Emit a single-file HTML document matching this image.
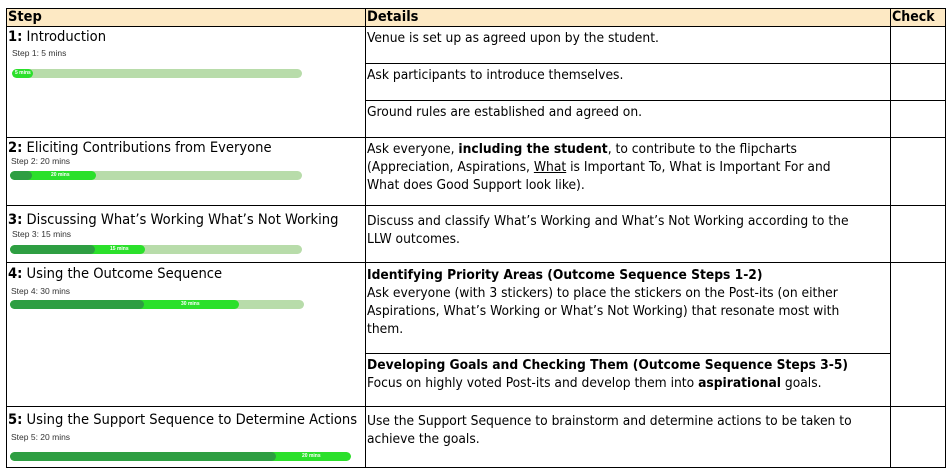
<!DOCTYPE html>
<html><head><style>
body{margin:0;width:952px;height:472px;background:#fff;position:relative;overflow:hidden;font-family:Tahoma,"DejaVu Sans Condensed","Liberation Sans",sans-serif;font-size:13.7px;color:#000}
.h{position:absolute;background:#000;height:1px}
.v{position:absolute;background:#000;width:1px}
.t{position:absolute;line-height:18px;white-space:nowrap}
.l{font-size:14.6px}
.s{position:absolute;font-size:8.5px;color:#333;font-family:"Liberation Sans",sans-serif}
.bar{position:absolute;height:9px;border-radius:5px;background:#b8dcaa;overflow:hidden}
.bar i{position:absolute;top:0;height:9px;border-radius:5px}
.bar b{position:absolute;top:0;font-size:5px;color:#fff;line-height:9px;font-weight:bold;font-family:"Liberation Sans",sans-serif}
</style></head><body>
<div style="position:absolute;left:6px;top:8px;width:939px;height:18px;background:#fde9c4"></div>
<div class="h" style="left:6px;top:8px;width:940px"></div>
<div class="h" style="left:6px;top:26px;width:940px"></div>
<div class="h" style="left:365px;top:63px;width:581px"></div>
<div class="h" style="left:365px;top:100px;width:581px"></div>
<div class="h" style="left:6px;top:137px;width:940px"></div>
<div class="h" style="left:6px;top:205px;width:940px"></div>
<div class="h" style="left:6px;top:262px;width:940px"></div>
<div class="h" style="left:365px;top:353px;width:525px"></div>
<div class="h" style="left:6px;top:406px;width:940px"></div>
<div class="h" style="left:6px;top:467px;width:940px"></div>
<div class="v" style="left:6px;top:8px;height:460px"></div>
<div class="v" style="left:365px;top:8px;height:460px"></div>
<div class="v" style="left:890px;top:8px;height:460px"></div>
<div class="v" style="left:945px;top:8px;height:460px"></div>

<div class="t" style="left:8px;top:8px;font-weight:bold;font-size:14.5px">Step</div>
<div class="t" style="left:367px;top:8px;font-weight:bold;font-size:14.5px">Details</div>
<div class="t" style="left:892px;top:8px;font-weight:bold;font-size:14px">Check</div>

<div class="t l" style="left:8px;top:28px"><b>1:</b> Introduction</div>
<div class="s" style="left:12px;top:48px">Step 1: 5 mins</div>
<div class="bar" style="left:12px;top:69px;width:290px"><i style="left:0;width:21px;background:#2be02b"></i><b style="left:3px">5 mins</b></div>
<div class="t" style="left:367px;top:29px">Venue is set up as agreed upon by the student.</div>
<div class="t" style="left:367px;top:66px">Ask participants to introduce themselves.</div>
<div class="t" style="left:367px;top:103px">Ground rules are established and agreed on.</div>

<div class="t l" style="left:8px;top:139px"><b>2:</b> Eliciting Contributions from Everyone</div>
<div class="s" style="left:11px;top:156px">Step 2: 20 mins</div>
<div class="bar" style="left:10px;top:171px;width:292px"><i style="left:0;width:86px;background:#2be02b"></i><i style="left:0;width:22px;background:#2e9e42"></i><b style="left:41px">20 mins</b></div>
<div class="t" style="left:367px;top:140px">Ask everyone, <b>including the student</b>, to contribute to the flipcharts<br>(Appreciation, Aspirations, <u>What</u> is Important To, What is Important For and<br>What does Good Support look like).</div>

<div class="t l" style="left:8px;top:211px"><b>3:</b> Discussing What’s Working What’s Not Working</div>
<div class="s" style="left:12px;top:229px">Step 3: 15 mins</div>
<div class="bar" style="left:10px;top:245px;width:292px"><i style="left:0;width:135px;background:#2be02b"></i><i style="left:0;width:85px;background:#2e9e42"></i><b style="left:100px">15 mins</b></div>
<div class="t" style="left:367px;top:212px">Discuss and classify What’s Working and What’s Not Working according to the<br>LLW outcomes.</div>

<div class="t l" style="left:8px;top:265px"><b>4:</b> Using the Outcome Sequence</div>
<div class="s" style="left:11px;top:286px">Step 4: 30 mins</div>
<div class="bar" style="left:10px;top:300px;width:294px"><i style="left:0;width:229px;background:#2be02b"></i><i style="left:0;width:134px;background:#2e9e42"></i><b style="left:171px">30 mins</b></div>
<div class="t" style="left:367px;top:266px"><b>Identifying Priority Areas (Outcome Sequence Steps 1-2)</b><br>Ask everyone (with 3 stickers) to place the stickers on the Post-its (on either<br>Aspirations, What’s Working or What’s Not Working) that resonate most with<br>them.</div>
<div class="t" style="left:367px;top:356px"><b>Developing Goals and Checking Them (Outcome Sequence Steps 3-5)</b><br>Focus on highly voted Post-its and develop them into <b>aspirational</b> goals.</div>

<div class="t l" style="left:8px;top:411px"><b>5:</b> Using the Support Sequence to Determine Actions</div>
<div class="s" style="left:11px;top:432px">Step 5: 20 mins</div>
<div class="bar" style="left:10px;top:452px;width:341px"><i style="left:0;width:341px;background:#2be02b"></i><i style="left:0;width:266px;background:#2e9e42"></i><b style="left:292px">20 mins</b></div>
<div class="t" style="left:367px;top:412px">Use the Support Sequence to brainstorm and determine actions to be taken to<br>achieve the goals.</div>
</body></html>
